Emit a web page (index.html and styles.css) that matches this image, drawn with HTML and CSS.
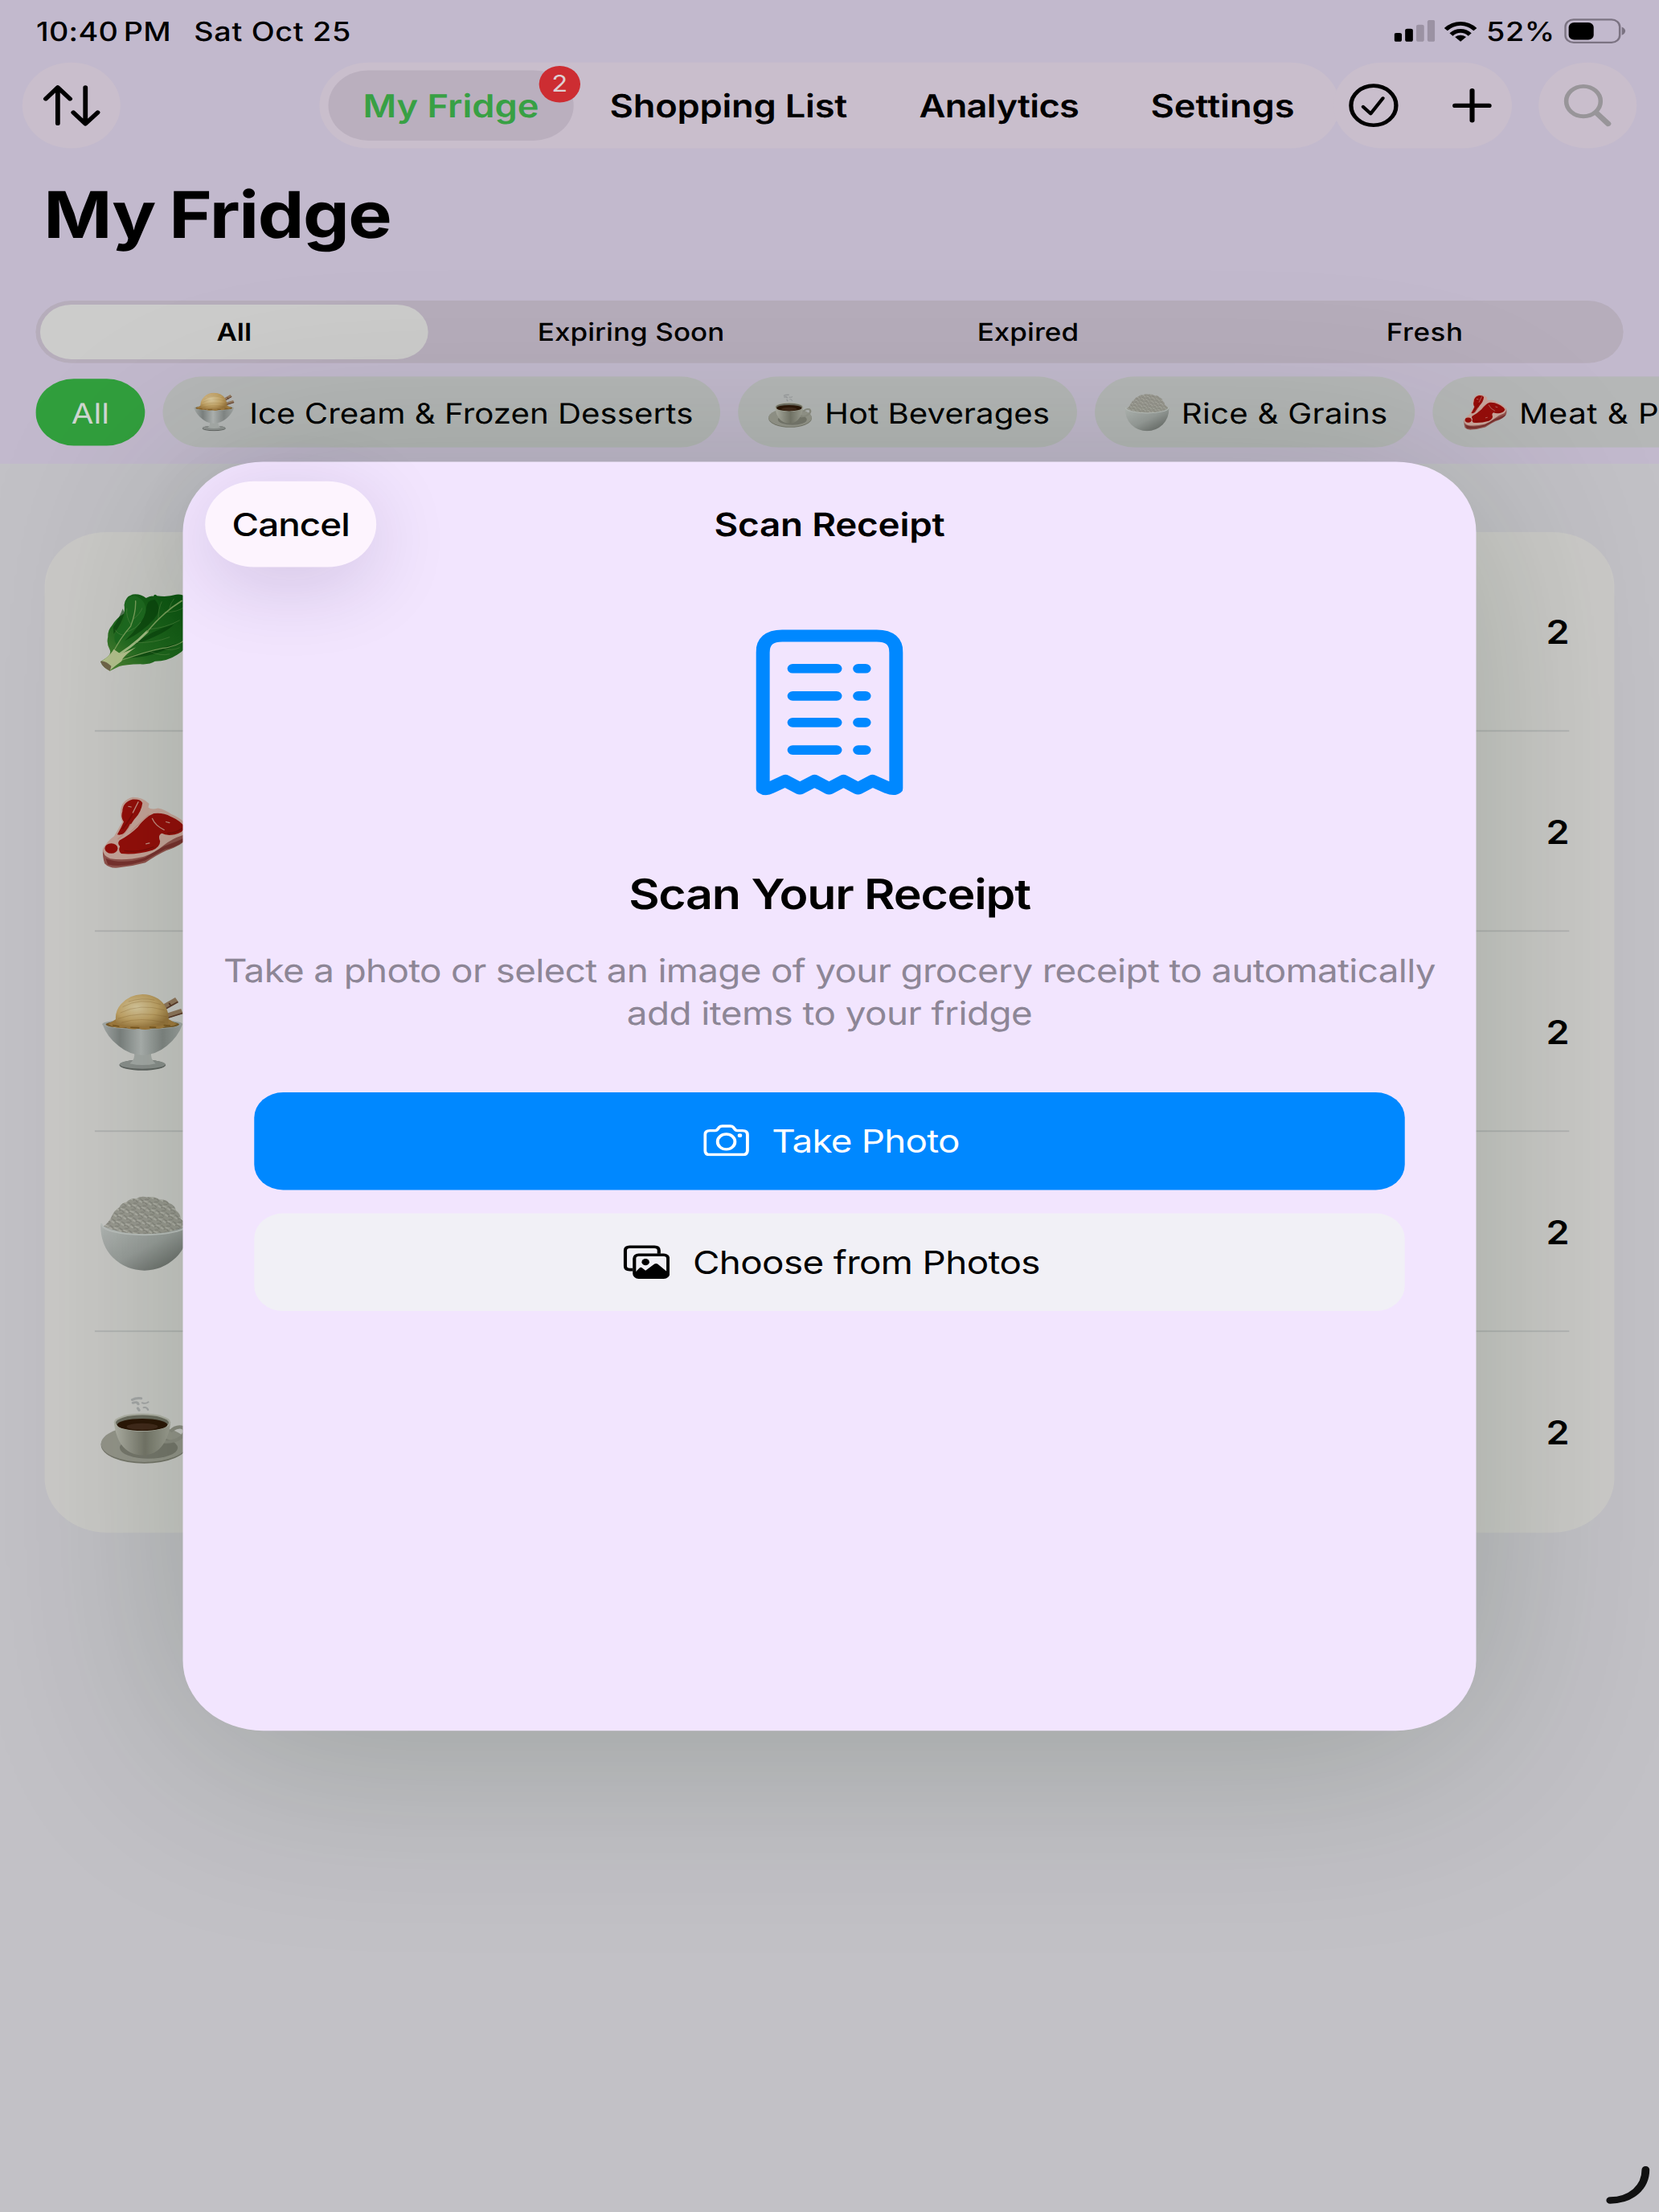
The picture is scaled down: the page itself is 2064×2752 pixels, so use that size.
FILE: index.html
```html
<!DOCTYPE html>
<html lang="en">
<head>
<meta charset="utf-8">
<title>My Fridge</title>
<link rel="stylesheet" href="styles.css">
</head>
<body>
<svg class="defs" aria-hidden="true">
  <defs>
    <linearGradient id="leaf" x1="0" y1="1" x2="1" y2="0">
      <stop offset="0" stop-color="#5c8a3a"/><stop offset=".35" stop-color="#236b20"/><stop offset="1" stop-color="#0a5210"/>
    </linearGradient>
    <linearGradient id="glass" x1="0" y1="0" x2="1" y2="0">
      <stop offset="0" stop-color="#a6aaa9"/><stop offset=".22" stop-color="#7d8281"/><stop offset=".48" stop-color="#b0b4b3"/><stop offset=".75" stop-color="#838786"/><stop offset="1" stop-color="#a2a6a5"/>
    </linearGradient>
    <radialGradient id="scoop" cx=".4" cy=".4" r=".65">
      <stop offset="0" stop-color="#dccba0"/><stop offset=".6" stop-color="#c4a468"/><stop offset="1" stop-color="#9a763e"/>
    </radialGradient>
    <linearGradient id="bowl" x1="0" y1="0" x2="1" y2="1">
      <stop offset="0" stop-color="#b4b8b6"/><stop offset=".5" stop-color="#999d9b"/><stop offset="1" stop-color="#5b5e5b"/>
    </linearGradient>
    <linearGradient id="cup" x1="0" y1="0" x2="1" y2="0">
      <stop offset="0" stop-color="#b3b3a9"/><stop offset=".55" stop-color="#77776b"/><stop offset="1" stop-color="#a3a398"/>
    </linearGradient>
    <pattern id="grain" width="4.4" height="3.4" patternUnits="userSpaceOnUse" patternTransform="rotate(17)">
      <path d="M.2 .8l1.6 .7M2.6 .5l1.3 -.4M1.2 2.6l1.5 -.6M3.2 2.2l1 .8" stroke="#7f7e77" stroke-width=".36" stroke-linecap="round"/>
      <path d="M.4 2l1 .4M2.4 1.4l1.5 .1" stroke="#b7b6ae" stroke-width=".6" stroke-linecap="round"/>
    </pattern>
    <symbol id="lettuce" viewBox="0 0 40 40">
      <path fill="url(#leaf)" d="M2.5 33.3Q5 31.5 4.3 29.2Q2.6 26 3.4 22.5Q3.3 19 5 17Q7 13 10.6 10.5Q11 8 10.7 6.2Q11 2 14.5 .7Q18 .2 20.5 2.6Q22.5 1.2 23.8 1.6Q24.3 .2 25.4 1.4Q30 2.2 34 .8Q37 .4 38.5 2.4Q40 4.5 39.2 8Q40.6 13 39 18Q40.4 22 38.6 25.5Q38.5 29 34.5 31.6Q30 35 24.5 35Q22 36.8 18 36.4Q11 36.6 8.5 37.6L4.3 39.9Q1 38 .1 35.2Z"/>
      <path fill="#063d0a" opacity=".6" d="M20.5 8Q19 16 11 24.5Q19 20 24 13.5Q28 8 24.5 3.5Q21 3 20.5 8ZM10 8Q8 14 5.8 17.3L6 21Q10 15 10.8 10ZM15 26.5Q23 19 33 16Q29 21 15 26.5ZM11 33Q22 34 36 25.5Q29 27.5 19 30.5Z"/>
      <path fill="#1e6a20" d="M10.9 6Q12 1.2 15.5 1.4Q20.5 3.4 20.4 9Q19.6 15 14 19.8L7.2 26.2Q4.8 22 8.7 17.8Q12 13 10.9 6Z"/>
      <g fill="none" stroke="#7ba05c" stroke-linecap="round">
        <path stroke="#a4bd84" stroke-width="1.2" d="M4 34.5Q14 28 21 19.8"/>
        <path stroke-width=".65" d="M21 19.8Q28 10 36.5 4"/>
        <path stroke-width=".5" d="M5.4 31Q9 23 13.6 17Q16 10 15.8 4M8 35Q20 30 28 28.2Q34 27.5 38 24"/>
        <path stroke-width=".28" opacity=".5" d="M13.6 16Q11.4 12 11.9 8M14.8 13.4Q18 10.5 18.7 7.8M10.3 21.6Q7.6 21 6.7 19M11.5 20Q16 18.5 18 15M22 18.5Q29 18 35.5 14M26 13Q26 8 27.5 4.5M29 9.8Q34.5 10 38 7M15.5 25.4Q24 25.8 31 22.6M22 29.8Q27 32.5 31 31.3M27.8 28.2Q32 30 35.5 28M31 8Q31.5 5 33 3"/>
      </g>
      <path fill="#b6c28e" d="M2.5 33.3Q5 31 6 28.8L9 31.2Q14 29 16 27.8Q10 32.5 9.5 35Q7 37 4.3 39.6Q1 37.6 .3 35.2Z"/>
      <path fill="#71664a" d="M.1 35Q1.8 34.2 4.9 37.4L4.3 39.9Q1 38.2 .1 35.2Z"/>
    </symbol>
    <symbol id="steak" viewBox="0 0 40 40">
      <path fill="#93534e" d="M1.1 29Q1 33 1.9 36Q4 38.6 7.9 38.2Q14 37.6 20.2 35.6Q25 31.8 29.5 29.4Q37 26.5 38.7 23Q40 20 38.8 16.5L20 22Z"/>
      <path fill="#6d1f1e" opacity=".65" d="M2.4 33.4Q10 36.8 20 33Q24 30 29 27Q34 25 38.6 22.4Q37 26.8 29 28.8L20 34.6Q10 38.4 3.4 36.6Z"/>
      <path fill="#c9a59b" d="M9.1 8.9Q9.5 3.6 14.5 2.1Q19 2.1 21.9 5.4L21.5 7.3Q22.8 8.7 25.9 7.7Q29 8.4 31.9 10.8Q36 12.6 38.6 16Q39.6 19.6 37 21.5Q32 23.4 28.6 26.6Q24 31 19.5 32.5Q11 34.8 4.5 33.5Q1 32 1.1 28.6Q3 24.6 6.2 22Q8 18.5 9.8 14.8Q8.8 11.8 9.1 8.9Z"/>
      <g fill="#960d0a">
        <path d="M9.9 9.4Q10 4.6 14.5 3.2Q18 2.9 18.9 5Q18.4 9.6 15.3 13.3Q13.2 17 11 20.4Q9 21.8 7.6 21.2Q9.4 17.6 10.5 14.7Q9 12.4 9.9 9.4Z"/>
        <path d="M8.6 24.2Q13 21.6 16.8 17.4Q20 12.2 24 10.4Q28 9.8 31.6 12Q36.4 14.4 37.8 17.5Q37.4 20 33.4 21.2Q29.6 22 27.6 20.6Q25.6 21.5 26.8 24.6Q26.8 27.6 23.4 29.2Q16 31.8 9.4 31Q7.8 29.6 8.8 27.3Q7.4 25.7 8.6 24.2Z"/>
        <ellipse cx="4.9" cy="28.3" rx="2.9" ry="2.6"/>
      </g>
      <path fill="none" stroke="#c58f84" stroke-width=".5" stroke-linecap="round" d="M23.3 13Q24.6 16.6 28.6 18.8M17 4.5L14.6 10M13.6 19.8Q18 15 21.7 11.2M8 23.4Q12 20 13.5 16M20.5 26l1.5 -.4M12.6 6.8l1.2 .3M29.5 14.7l1.5 .5"/>
      <path fill="none" stroke="#6e0807" stroke-width=".6" opacity=".6" d="M10.7 29.5Q17 30.7 24 27.5M30 20.6Q34.5 20.3 36.6 18M9.9 18.4Q12.4 15 14.5 10.6"/>
    </symbol>
    <symbol id="sundae" viewBox="0 0 40 40">
      <g stroke-linecap="butt"><path stroke="#94785e" stroke-width="2.6" d="M28.6 7L34.3 3.3M29.6 11.7L36.6 9.2"/><path stroke="#5d3a2b" stroke-width=".7" d="M29 8.2L34.8 4.4M30 12.7L36.9 10.2M30.8 5l1 1.7"/></g>
      <ellipse cx="18.9" cy="36.8" rx="10.4" ry="2.7" fill="#606462"/>
      <ellipse cx="18.9" cy="36.4" rx="10.2" ry="2.3" fill="#8c908e"/>
      <path fill="#a6aaa8" d="M15.2 30.5h7.6Q22.3 33.6 24.8 36Q19 37.6 13.2 36Q15.8 33.6 15.2 30.5Z"/>
      <path fill="url(#glass)" d="M.9 15.8Q3 22.5 8.2 27Q13.2 31.7 18.9 31.7Q24.8 31.7 29.8 27Q34.8 22.5 36.9 15.8Z"/>
      <ellipse cx="18.9" cy="15.9" rx="18" ry="2.7" fill="#a5a9a7"/>
      <ellipse cx="18.9" cy="16" rx="16.5" ry="2.2" fill="#7b5c2b"/>
      <path fill="#a27b3f" d="M3.5 15.8L8 12.6H29.6L34.4 15.8Q32 17.5 29.4 16.8Q27 19 24 17.6Q20.6 19.5 17 18Q13.6 19.2 11.4 17.4Q7 18.6 3.5 15.8Z"/>
      <path fill="url(#scoop)" d="M7.1 15.4Q6.1 9.6 9.2 5.7Q12.9 .6 18.9 .5Q25.6 .8 28.8 6Q31.4 11 30.3 15.8Q26 17.5 24.3 15.9Q20 18.5 16.6 16.5Q12.5 17.8 7.1 15.4Z"/>
      <path fill="none" stroke="#7e5928" stroke-width=".25" opacity=".4" d="M9 10Q18 5 28.7 8.6M8 13Q18 9 29.8 12M10 7Q18 2 27 5.7M9.5 15Q18 12 28.8 15M12.6 4.3Q18.6 2 24.3 3.5"/>
      <path fill="none" stroke="#7a561f" stroke-width=".6" d="M5.5 16.4l3 .6M13.5 17.5l4 .2M22 17.4l3 .1M28.4 16.4l3 .2"/>
    </symbol>
    <symbol id="rice" viewBox="0 0 40 40">
      <path fill="#9b9a92" d="M1 17.4Q4.2 14.5 5.3 11.3Q6.2 8.8 8.5 7.2Q9.2 5 11.8 4.4Q13.6 2.3 16.3 2.6Q18.4 1.1 21 2Q24.5 1.5 26.5 3.2Q29.6 2.9 30.8 5Q33.5 6 33.8 8.7Q36 10.4 36 13.2Q39.5 15.4 38.9 17.5Q30 22.4 19.7 21.8Q9 22 1 17.4Z"/>
      <path fill="url(#grain)" d="M1 17.4Q4.2 14.5 5.3 11.3Q6.2 8.8 8.5 7.2Q9.2 5 11.8 4.4Q13.6 2.3 16.3 2.6Q18.4 1.1 21 2Q24.5 1.5 26.5 3.2Q29.6 2.9 30.8 5Q33.5 6 33.8 8.7Q36 10.4 36 13.2Q39.5 15.4 38.9 17.5Q30 22.4 19.7 21.8Q9 22 1 17.4Z"/>
      <path fill="url(#bowl)" d="M.1 16.2Q9 21 19.8 21Q31 21 39.5 16.2Q39.6 26.5 33.9 32.9Q27.8 39.5 19.8 39.5Q11.6 39.5 5.6 32.9Q.1 26.5 .1 16.2Z"/>
      <path fill="none" stroke="#bdc1bf" stroke-width=".8" stroke-linecap="round" d="M.5 15.8Q1 18 5 19.3Q11.6 21.2 19.8 21.2Q28 21.2 34.6 19.3Q38.8 18 39.1 15.8"/>
    </symbol>
    <symbol id="coffee" viewBox="0 0 40 40">
      <ellipse cx="19.7" cy="26.4" rx="19.4" ry="9.5" fill="#77776c"/>
      <ellipse cx="19.7" cy="25.8" rx="19.4" ry="9.3" fill="#95958b"/>
      <ellipse cx="21.7" cy="27.8" rx="13" ry="5.6" fill="#5f5f55" opacity=".55"/>
      <path fill="none" stroke="#8d8d83" stroke-width="1.7" d="M31.4 19.5Q34 16.4 37 17.4Q39 19.4 36.3 22.4Q33.3 25.1 28.4 24.6"/>
      <path fill="url(#cup)" d="M6.1 14.8Q6.8 21.7 9.3 26Q12.8 31.6 18.9 31.6Q25 31.6 28.2 26Q30.9 21.7 31.5 14.8Z"/>
      <ellipse cx="18.8" cy="14.8" rx="12.7" ry="4.6" fill="#b2b2a8"/>
      <ellipse cx="18.8" cy="15" rx="11.9" ry="3.9" fill="#6e6e62"/>
      <ellipse cx="18.8" cy="16" rx="11.3" ry="3.1" fill="#2c1607"/>
      <ellipse cx="18.8" cy="17" rx="7" ry="1.7" fill="#42291b"/>
      <g fill="none" stroke="#83858a" stroke-linecap="round" opacity=".5"><path stroke-width="1.2" d="M14.3 3.2Q16 2.2 18.3 2.5M14.6 4.8Q16.6 4 17 5.4M16.8 7.6l.6 1"/><path stroke-width=".8" d="M18.8 4.8Q20.4 5.4 21.5 4.4M19.4 7.2Q20.8 6.8 21.4 8.4"/></g>
    </symbol>
  </defs>
</svg>

<div class="screen">
  <header class="header">
    <div class="status">
      <div class="status-left"><span class="t s-time">10:40 PM</span><span class="t s-date">Sat Oct 25</span></div>
      <div class="status-right">
        <svg class="bars" viewBox="0 0 18.4 11.2"><rect x="0" y="6.6" width="3.4" height="4.5" rx="1"/><rect x="4.9" y="4.5" width="3.5" height="6.6" rx="1"/><g fill="#9b92a3"><rect x="9.9" y="2.4" width="3.5" height="8.7" rx="1"/><rect x="14.9" y="0" width="3.4" height="11.1" rx="1"/></g></svg>
        <svg class="wifi" viewBox="0 0 15 10.4"><g fill="none" stroke="#000" stroke-width="2"><path d="M.9 4.1Q3.8 1.1 7.5 1.1T14.1 4.1"/><path d="M3.3 6.7Q5.1 4.8 7.5 4.8T11.7 6.7"/></g><path d="M7.5 10.3L5 7.9Q7.5 6.1 10 7.9Z"/></svg>
        <span class="t s-pct">52%</span>
        <svg class="battery" viewBox="0 0 28 13"><rect x=".5" y=".5" width="24.4" height="11.8" rx="3.7" fill="none" stroke="#7b7382" stroke-width=".9"/><rect x="2" y="2" width="11.2" height="8.9" rx="2.4"/><path fill="#7b7382" d="M25.8 4.3Q27.4 5 27.4 6.4T25.8 8.5Z"/></svg>
      </div>
    </div>

    <div class="toolbar">
      <button class="round"><svg viewBox="0 0 44 44"><g fill="none" stroke="#000" stroke-width="2.1" stroke-linecap="round" stroke-linejoin="round"><path d="M15.9 31.2V12.8M10.5 18.6L15.9 12.8L21.4 18.6M28.3 12.8V31.2M22.9 25.6L28.3 31.4L33.8 25.6"/></g></svg></button>
      <nav class="tabs">
        <a class="tab tab-on"><span class="t">My Fridge</span><span class="badge">2</span></a>
        <a class="tab"><span class="t t-shop">Shopping List</span></a>
        <a class="tab"><span class="t t-ana">Analytics</span></a>
        <a class="tab"><span class="t">Settings</span></a>
      </nav>
      <div class="actions">
        <svg viewBox="0 0 80 44"><g fill="none" stroke="#000" stroke-linecap="round" stroke-linejoin="round"><circle cx="18" cy="22" r="10.1" stroke-width="1.9"/><path stroke-width="1.6" d="M13.3 22.7L16.7 26.2L22.2 18.3"/><path stroke-width="2.2" d="M62.2 14.4V29.7M54.5 22.1H69.8"/></g></svg>
      </div>
      <button class="round search"><svg viewBox="0 0 44 44"><g fill="none" stroke="#989599" stroke-linecap="round"><circle cx="20.1" cy="19.9" r="7.7" stroke-width="2"/><path stroke-width="2.6" d="M25.9 25.8L31.2 31.4"/></g></svg></button>
    </div>

    <h1 class="title"><span class="t">My Fridge</span></h1>

    <div class="segments">
      <span class="seg seg-on"><span class="t">All</span></span>
      <span class="seg"><span class="t g-soon">Expiring Soon</span></span>
      <span class="seg"><span class="t g-exp">Expired</span></span>
      <span class="seg"><span class="t g-fresh">Fresh</span></span>
    </div>

    <div class="chips">
      <span class="chip chip-all"><span class="t">All</span></span>
      <span class="chip c1"><svg class="emoji"><use href="#sundae"/></svg><span class="t">Ice Cream &amp; Frozen Desserts</span></span>
      <span class="chip c2"><svg class="emoji"><use href="#coffee"/></svg><span class="t">Hot Beverages</span></span>
      <span class="chip c3"><svg class="emoji"><use href="#rice"/></svg><span class="t c-rice">Rice &amp; Grains</span></span>
      <span class="chip c4"><svg class="emoji"><use href="#steak"/></svg><span class="t c-meat">Meat &amp; P</span></span>
    </div>
  </header>

  <main class="list">
    <div class="row"><svg class="food"><use href="#lettuce"/></svg><span class="qty">2</span></div>
    <div class="row"><svg class="food"><use href="#steak"/></svg><span class="qty">2</span></div>
    <div class="row"><svg class="food"><use href="#sundae"/></svg><span class="qty">2</span></div>
    <div class="row"><svg class="food"><use href="#rice"/></svg><span class="qty">2</span></div>
    <div class="row"><svg class="food"><use href="#coffee"/></svg><span class="qty">2</span></div>
  </main>

  <section class="sheet">
    <div class="sheet-bar">
      <button class="cancel"><span class="t">Cancel</span></button>
      <h2 class="sheet-title"><span class="t">Scan Receipt</span></h2>
    </div>
    <svg class="receipt" viewBox="0 0 66 85.4"><g fill="none" stroke="#0088ff" stroke-linecap="round" stroke-linejoin="round"><path stroke-width="6.2" d="M3.1 81.4V12Q3.1 3.4 11.8 3.4H54.2Q62.9 3.4 62.9 12V81.4Q61.8 82.4 59.2 81.2L52.3 77.7L45.8 81.6L39.3 77.7L32.8 81.6L26.3 77.7L19.7 81.6L13.2 77.7L6.6 81.2Q4.4 82.4 3.1 81.4Z"/><path stroke-width="4.8" d="M16.5 20.2H36.2M45.9 20.2H49.2M16.5 34.2H36.2M45.9 34.2H49.2M16.5 47.8H36.2M45.9 47.8H49.2M16.5 61.9H36.2M45.9 61.9H49.2"/></g></svg>
    <h3 class="headline"><span class="t">Scan Your Receipt</span></h3>
    <p class="hint"><span class="h-1">Take a photo or select an image of your grocery receipt to automatically</span><br><span class="h-2">add items to your fridge</span></p>
    <div class="buttons">
      <button class="btn primary">
        <svg class="cam" viewBox="0 0 20.4 16.2"><g fill="none" stroke="#fff" stroke-width="1.4" stroke-linejoin="round"><path d="M2.9 3.1H5.2Q6 3.1 6.5 2.2L7.1 1.3Q7.5 .8 8.4 .8H12Q12.9 .8 13.3 1.3L13.9 2.2Q14.4 3.1 15.2 3.1H17.5Q19.7 3.1 19.7 5.2V13.3Q19.7 15.4 17.5 15.4H2.9Q.7 15.4 .7 13.3V5.2Q.7 3.1 2.9 3.1Z"/><circle cx="10.2" cy="8.8" r="3.9"/></g><circle cx="16.3" cy="5.6" r="1" fill="#fff"/></svg>
        <span class="t b-take">Take Photo</span>
      </button>
      <button class="btn secondary">
        <svg class="pics" viewBox="0 0 20.9 17.3"><g fill="none" stroke="#000" stroke-width="1.5" stroke-linejoin="round"><path d="M4.2 12.6H2.9Q.9 12.6 .9 10.7V2.8Q.9 .9 2.9 .9H14Q16 .9 16 2.8V4.4"/><rect x="5" y="5" width="15.1" height="11.5" rx="1.9"/></g><circle cx="10" cy="8.7" r="1.7"/><path d="M5 14.4L7.3 11.7Q7.9 11.1 8.5 11.7L10 13.1L14 9.7Q14.7 9.2 15.4 9.7L20 14V15.6Q19.7 16.6 18.4 16.6H6.8Q5.2 16.6 5 15.4Z"/></svg>
        <span class="t b-choose">Choose from Photos</span>
      </button>
    </div>
  </section>

  <svg class="corner" viewBox="0 0 22 22"><path d="M18 3.3Q18 10.2 13.5 14.6T2.1 19" fill="none" stroke="#111" stroke-width="3.5" stroke-linecap="round"/></svg>
</div>
</body>
</html>
```
FILE: styles.css
```css
* { box-sizing: border-box; }

html { height: 2752px; overflow: hidden; }

body {
  display: flex;
  align-items: flex-start;
  margin: 0;
  width: 2064px;
  height: 2752px;
  overflow: hidden;
  background: #c2c1c6;
}

.defs { position: absolute; width: 0; height: 0; }

.screen {
  position: relative;
  flex: none;
  width: 744px;
  height: 1133px;
  margin: 0 -228px -445px 0;
  overflow: hidden;
  zoom: 4;
  transform: scale(.693548, .607237);
  transform-origin: 0 0;
  background: #c2c1c6;
  color: #000;
  font-family: Inter, "Liberation Sans", sans-serif;
  text-rendering: geometricPrecision;
}

button { border: 0; padding: 0; margin: 0; font: inherit; color: inherit; background: none; }
h1, h2, h3, p { margin: 0; font-weight: inherit; }
svg { display: block; flex: none; }
.t { white-space: pre; display: inline-block; }

.header { height: 237.5px; background: #c2b9cd; overflow: hidden; }

.status {
  display: flex;
  justify-content: space-between;
  align-items: center;
  height: 32px;
  padding: .4px 14.6px 0 16.2px;
  font-size: 13.6px;
  font-weight: 500;
}
.status-left, .status-right { display: flex; align-items: center; }
.status-left { gap: 10.2px; }
.s-time { letter-spacing: .12px; word-spacing: -1.4px; }
.s-date { letter-spacing: .247px; }
.s-pct { letter-spacing: .2px; }
.bars { width: 18.4px; height: 11.2px; margin-right: 3.9px; margin-top: -.5px; }
.wifi { width: 15px; height: 10.4px; margin-right: 4px; }
.battery { width: 28px; height: 13px; margin-left: 4px; margin-top: -.4px; }

.toolbar { display: flex; height: 44px; padding: 0 10px; }
.round { width: 44px; height: 44px; border-radius: 22px; background: #c9becc; }
.round svg { width: 44px; height: 44px; }
.tabs {
  display: flex;
  align-items: center;
  width: 457.6px;
  height: 44px;
  margin-left: 89.2px;
  padding: 0 4px;
  border-radius: 22px;
  background: #c9becc;
  font-size: 16.3px;
  font-weight: 560;
}
.tab { position: relative; display: flex; align-items: center; justify-content: center; height: 36px; width: 139px; }
.tab-on { width: 110px; border-radius: 18px; background: #baafbe; color: #38a044; }
.tab:nth-child(3) { width: 103.6px; }
.tab:nth-child(4) { width: 97px; }
.t-shop { letter-spacing: -.08px; }
.t-ana { letter-spacing: -.25px; }
.badge {
  position: absolute;
  top: -2.2px;
  right: -3px;
  width: 18.4px;
  height: 18.6px;
  border-radius: 50%;
  background: #cd2d32;
  color: #ddd0d3;
  font-size: 11.8px;
  font-weight: 400;
  line-height: 18.6px;
  text-align: center;
}
.actions { width: 80px; height: 44px; margin-left: -2.8px; border-radius: 22px; background: #c9becc; }
.actions svg { width: 80px; height: 44px; }
.search { margin-left: 12px; }

.title { height: 68px; padding-left: 19.6px; font-size: 33px; font-weight: 700; line-height: 68px; letter-spacing: -.52px; word-spacing: -1px; }

.segments { display: grid; grid-template-columns: repeat(4, 1fr); height: 32px; margin: 10px 16px 0; border-radius: 16px; background: #b6adbb; font-size: 12.6px; font-weight: 500; }
.seg { display: flex; align-items: center; justify-content: center; }
.seg-on { margin: 2px; border-radius: 14px; background: #cccccb; font-weight: 600; }
.g-soon, .g-exp { letter-spacing: .03px; }
.g-fresh { letter-spacing: .2px; }

.chips { display: flex; align-items: center; gap: 8px; height: 36.5px; margin: 6.8px 0 0 16px; overflow: hidden; font-size: 14.5px; letter-spacing: .01px; }
.chip { display: flex; flex: none; align-items: center; height: 36.5px; border-radius: 18.2px; background: #b5b7b7; padding-left: 13.4px; }
.chip .t { padding-top: 1.4px; }
.chip-all { width: 49px; height: 34.2px; padding: 0; justify-content: center; background: #319f3d; color: #d0d6d1; }
.c1 { width: 250px; }
.c2 { width: 152px; }
.c3 { width: 143.5px; }
.c4 { width: 101.5px; border-radius: 18.2px 0 0 18.2px; }
.c-rice { letter-spacing: .1px; }
.c-meat { letter-spacing: .175px; }
.emoji { width: 20px; height: 20px; margin-right: 5.4px; }

.list { margin: 35px 20px 0; border-radius: 28px; background: #cbcac8; }
.row { position: relative; display: flex; align-items: center; justify-content: space-between; height: 102.5px; padding: 0 20.2px 0 25px; }
.row + .row::before { content: ""; position: absolute; top: -1px; left: 22.5px; right: 20.3px; height: .75px; background: #b3b4b4; }
.food { width: 40px; height: 40px; }
.qty { font-size: 16.8px; font-weight: 600; }

.sheet {
  position: absolute;
  left: 82.1px;
  top: 236.4px;
  width: 579.8px;
  height: 650px;
  padding-top: 10px;
  border-radius: 36px;
  background: #f2e5fe;
  box-shadow: 0 8px 100px rgba(0, 40, 0, .21);
  display: flex;
  flex-direction: column;
  align-items: center;
}
.sheet-bar { display: grid; grid-template-columns: 1fr auto 1fr; align-items: center; width: 100%; height: 44px; padding: 0 10px; }
.cancel { width: 76.6px; height: 44px; border-radius: 22px; background: #fdf4fe; box-shadow: 0 8px 38px rgba(40, 10, 80, .16); font-size: 16.5px; font-weight: 450; letter-spacing: -.34px; }
.sheet-title { font-size: 16.5px; font-weight: 600; letter-spacing: -.075px; }
.receipt { width: 66px; height: 85.4px; margin-top: 31.8px; }
.headline { margin-top: 36.2px; font-size: 21.3px; font-weight: 600; line-height: 28px; letter-spacing: -.44px; }
.hint { margin-top: 14.2px; font-size: 16.5px; line-height: 22px; text-align: center; color: #8d8696; white-space: nowrap; }
.h-1 { letter-spacing: -.235px; }
.h-2 { letter-spacing: -.19px; }
.buttons { display: flex; flex-direction: column; gap: 12px; width: 516px; margin-top: 29.5px; }
.btn { display: flex; align-items: center; justify-content: center; height: 50px; padding-left: 1.8px; border-radius: 13px; font-size: 16.5px; }
.primary { background: #0088ff; color: #fff; }
.secondary { background: #f1f0f6; }
.cam { width: 20.4px; height: 16.2px; margin-right: 10.2px; margin-top: -.6px; }
.pics { width: 20.9px; height: 17.3px; margin-right: 10.4px; }
.b-take { letter-spacing: -.28px; }
.b-choose { letter-spacing: -.22px; }

.corner { position: absolute; left: 720px; top: 1108px; width: 22px; height: 22px; }
```
